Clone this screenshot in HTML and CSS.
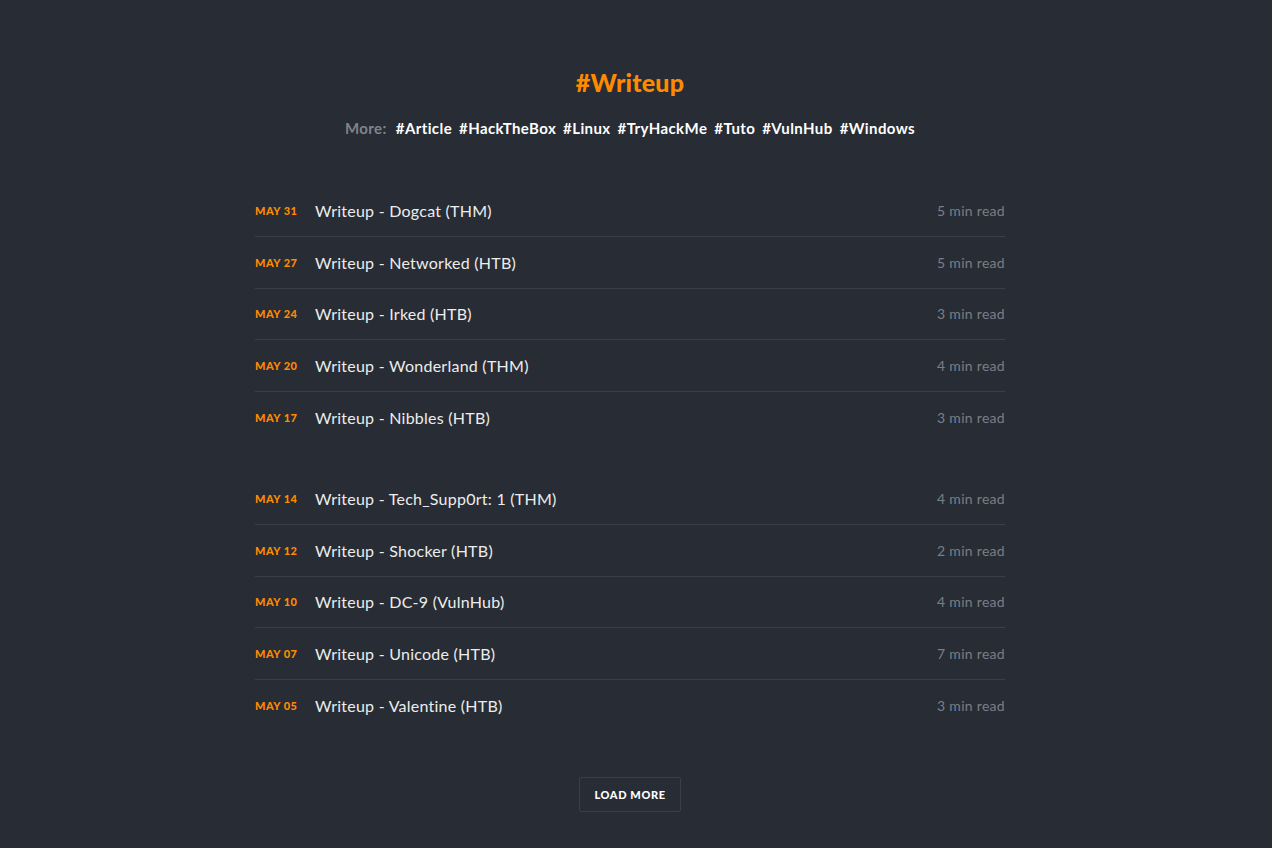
FILE: index.html
```html
<!DOCTYPE html>
<html lang="en">
<head>
<meta charset="utf-8">
<title>#Writeup</title>
<link rel="stylesheet" href="styles.css">
</head>
<body>
<main class="page">
  <header class="head">
    <h1 class="title">#Writeup</h1>
    <p class="more"><span class="more-label">More:</span>
      <a href="#">#Article</a>
      <a href="#">#HackTheBox</a>
      <a href="#">#Linux</a>
      <a href="#">#TryHackMe</a>
      <a href="#">#Tuto</a>
      <a href="#">#VulnHub</a>
      <a href="#">#Windows</a>
    </p>
  </header>

  <ul class="group">
    <li class="row"><span class="date">May 31</span><a class="name" href="#">Writeup - Dogcat (THM)</a><span class="read">5 min read</span></li>
    <li class="row"><span class="date">May 27</span><a class="name" href="#">Writeup - Networked (HTB)</a><span class="read">5 min read</span></li>
    <li class="row"><span class="date">May 24</span><a class="name" href="#">Writeup - Irked (HTB)</a><span class="read">3 min read</span></li>
    <li class="row"><span class="date">May 20</span><a class="name" href="#">Writeup - Wonderland (THM)</a><span class="read">4 min read</span></li>
    <li class="row"><span class="date">May 17</span><a class="name" href="#">Writeup - Nibbles (HTB)</a><span class="read">3 min read</span></li>
  </ul>

  <ul class="group">
    <li class="row"><span class="date">May 14</span><a class="name" href="#">Writeup - Tech_Supp0rt: 1 (THM)</a><span class="read">4 min read</span></li>
    <li class="row"><span class="date">May 12</span><a class="name" href="#">Writeup - Shocker (HTB)</a><span class="read">2 min read</span></li>
    <li class="row"><span class="date">May 10</span><a class="name" href="#">Writeup - DC-9 (VulnHub)</a><span class="read">4 min read</span></li>
    <li class="row"><span class="date">May 07</span><a class="name" href="#">Writeup - Unicode (HTB)</a><span class="read">7 min read</span></li>
    <li class="row"><span class="date">May 05</span><a class="name" href="#">Writeup - Valentine (HTB)</a><span class="read">3 min read</span></li>
  </ul>

  <div class="load">
    <button class="load-btn" type="button">Load more</button>
  </div>
</main>
</body>
</html>
```
FILE: styles.css
```css
html, body {
  margin: 0;
  padding: 0;
  background: #282c34;
}
body {
  font-family: "Lato", "Noto Sans", sans-serif;
  color: #e6e6e6;
  min-height: 848px;
  padding-right: 12px;
}
.page {
  width: 750px;
  margin: 0 auto;
  padding-top: 66px;
}
.head {
  text-align: center;
}
.title {
  margin: 0;
  font-size: 25px;
  line-height: 32px;
  font-weight: 900;
  color: #ff8a00;
  letter-spacing: 0.2px;
}
.more {
  display: flex;
  justify-content: center;
  gap: 7px;
  margin: 20px 0 0;
  font-size: 15px;
  line-height: 20px;
  font-weight: 700;
  letter-spacing: 0.4px;
}
.more-label {
  color: #80838a;
  margin-right: 2px;
}
.more a {
  color: #ffffff;
  text-decoration: none;
}
.group {
  list-style: none;
  margin: 0;
  padding: 0;
}
.group:first-of-type {
  margin-top: 47px;
}
.group + .group {
  margin-top: 30.25px;
}
.row {
  display: flex;
  align-items: center;
  height: 50.75px;
  border-bottom: 1px solid #3b3f47;
}
.row:last-child {
  border-bottom: none;
}
.date {
  width: 60px;
  flex: none;
  font-size: 11px;
  font-weight: 900;
  text-transform: uppercase;
  color: #ff8a00;
  letter-spacing: 0.5px;
}
.name {
  flex: 1;
  font-size: 16px;
  letter-spacing: 0.25px;
  color: #ececec;
  text-decoration: none;
}
.read {
  font-size: 14px;
  letter-spacing: 0.3px;
  color: #7b7e85;
}
.load {
  display: flex;
  justify-content: center;
  margin-top: 46px;
}
.load-btn {
  background: transparent;
  border: 1px solid #3b3f47;
  border-radius: 2px;
  color: #ffffff;
  font-family: inherit;
  font-size: 11px;
  font-weight: 900;
  text-transform: uppercase;
  width: 102px;
  height: 35px;
  padding: 0;
  letter-spacing: 0.6px;
}
```
